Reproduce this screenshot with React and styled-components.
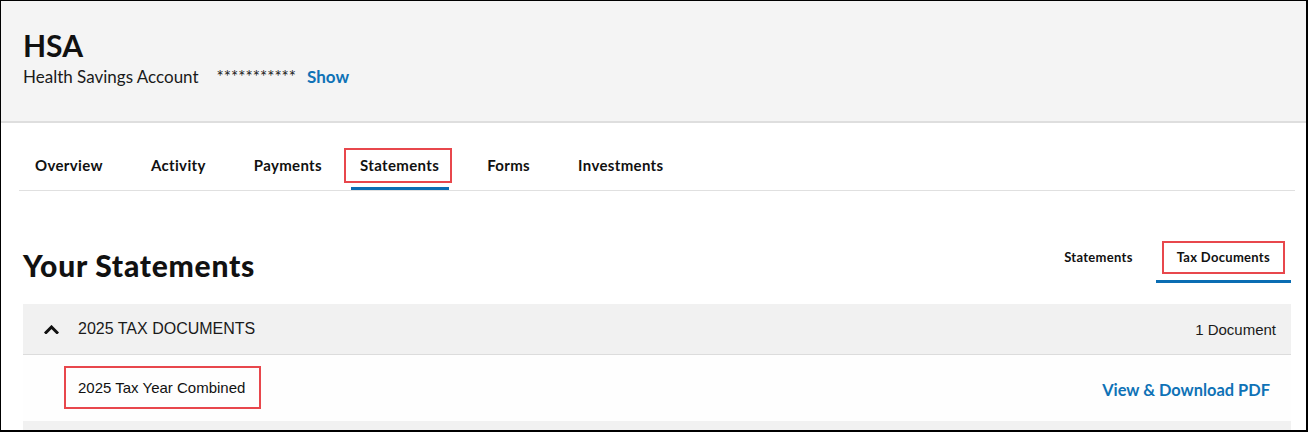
import React from "react";
import styled, { createGlobalStyle } from "styled-components";

const GlobalStyle = createGlobalStyle`
  html, body {
    margin: 0;
    padding: 0;
    background: #fff;
  }
  body {
    font-family: Lato, "Open Sans", sans-serif;
    color: #1a1a1a;
  }
`;

const BLUE = "#0f72b6";
const RED = "#e8474c";

const Frame = styled.div`
  box-sizing: border-box;
  width: 1308px;
  height: 432px;
  border-style: solid;
  border-color: #000;
  border-width: 1px 2px 2px 1px;
  overflow: hidden;
  background: #fff;
`;

const AccountHeader = styled.header`
  box-sizing: border-box;
  height: 122px;
  padding: 26px 22px 0;
  background: #f4f4f4;
  border-bottom: 2px solid #dedede;
`;

const AccountTitle = styled.h1`
  margin: 0;
  font-size: 30px;
  line-height: 36px;
  font-weight: 700;
  color: #111;
`;

const AccountLine = styled.div`
  display: flex;
  align-items: baseline;
  margin-top: 4px;
  font-size: 17px;
  line-height: 20px;
  color: #1a1a1a;
`;

const Masked = styled.span`
  margin-left: 18px;
`;

const TextLink = styled.a`
  margin-left: ${(p) => p.$gap || 0}px;
  margin-top: ${(p) => p.$top || 0}px;
  font-family: Lato, "Open Sans", sans-serif;
  color: ${BLUE};
  font-weight: 700;
  font-size: ${(p) => p.$size || 17}px;
  text-decoration: none;
  cursor: pointer;
`;

const TabBar = styled.nav`
  display: flex;
  gap: 16px;
  margin: 0 11px 0 18px;
  padding-top: 25px;
  border-bottom: 1px solid #e0e0e0;
`;

const Tab = styled.div`
  position: relative;
  display: flex;
  flex-direction: column;
  padding: 0 16px;
  margin-left: ${(p) => (p.$marked ? -10 : 0)}px;
  font-size: 15px;
  font-weight: 700;
  letter-spacing: 0.35px;
  color: #111;

  ${(p) =>
    p.$marked &&
    `
    &::before {
      content: "";
      position: absolute;
      top: 0;
      left: 0;
      right: 3px;
      height: 35px;
      box-sizing: border-box;
      border: 2px solid ${RED};
    }
  `}
`;

const TabLabel = styled.span`
  line-height: 35px;
  white-space: nowrap;
`;

const TabUnderline = styled.span`
  height: 3px;
  margin: 4px -10px 0 -9px;
  background: ${(p) => (p.$active ? "#0a6db3" : "transparent")};
`;

const Main = styled.main`
  padding: 50px 15px 0 22px;
`;

const SectionHead = styled.div`
  display: flex;
  justify-content: space-between;
  align-items: flex-start;
`;

const SectionTitle = styled.h2`
  margin: 6px 0 0;
  font-size: 30px;
  line-height: 36px;
  font-weight: 900;
  letter-spacing: 0.75px;
  color: #111;
`;

const SubTabs = styled.div`
  display: flex;
  gap: 2px;
`;

const SubTab = styled.div`
  position: relative;
  display: flex;
  flex-direction: column;
  font-size: 13px;
  font-weight: 700;
  letter-spacing: 0.3px;
  color: #111;

  ${(p) =>
    p.$marked &&
    `
    &::before {
      content: "";
      position: absolute;
      top: 0;
      left: 6px;
      right: 6px;
      height: 33px;
      box-sizing: border-box;
      border: 2px solid ${RED};
    }
  `}
`;

const SubTabLabel = styled.span`
  padding: 0 21px;
  line-height: 33px;
  white-space: nowrap;
`;

const SubTabUnderline = styled.span`
  height: 3px;
  margin-top: 6px;
  background: ${(p) => (p.$active ? "#0a6db3" : "transparent")};
`;

const Accordion = styled.section`
  margin-top: 21px;
  font-family: "Liberation Sans", Arial, sans-serif;
`;

const GroupHeader = styled.div`
  display: flex;
  align-items: center;
  height: 50px;
  padding: 0 15px 0 21px;
  background: #f1f1f1;
  border-bottom: 1px solid #dcdcdc;
  color: #1a1a1a;
`;

const Chevron = styled.svg`
  width: 15px;
  height: 9px;
  margin-right: 19px;
  flex-shrink: 0;
`;

const GroupTitle = styled.span`
  flex: 1;
  font-size: 16px;
`;

const GroupCount = styled.span`
  font-size: 15px;
`;

const DocRow = styled.div`
  display: flex;
  align-items: center;
  justify-content: space-between;
  height: 66px;
  padding: 0 21px 0 55px;
  background: #fefefe;
`;

const DocName = styled.span`
  position: relative;
  font-size: 15px;
  color: #111;
  margin-top: -2px;

  &::before {
    content: "";
    position: absolute;
    left: -14px;
    right: -16px;
    top: -13px;
    bottom: -13px;
    border: 2px solid ${RED};
  }
`;

const NextGroup = styled.div`
  height: 20px;
  background: #f1f1f1;
`;

const tabs = ["Overview", "Activity", "Payments", "Statements", "Forms", "Investments"];

export default function App() {
  return (
    <Frame>
      <GlobalStyle />
      <AccountHeader>
        <AccountTitle>HSA</AccountTitle>
        <AccountLine>
          <span>Health Savings Account</span>
          <Masked>***********</Masked>
          <TextLink $gap={11}>Show</TextLink>
        </AccountLine>
      </AccountHeader>

      <TabBar>
        {tabs.map((t) => (
          <Tab key={t} $marked={t === "Statements"}>
            <TabLabel>{t}</TabLabel>
            <TabUnderline $active={t === "Statements"} />
          </Tab>
        ))}
      </TabBar>

      <Main>
        <SectionHead>
          <SectionTitle>Your Statements</SectionTitle>
          <SubTabs>
            <SubTab>
              <SubTabLabel>Statements</SubTabLabel>
              <SubTabUnderline />
            </SubTab>
            <SubTab $marked>
              <SubTabLabel>Tax Documents</SubTabLabel>
              <SubTabUnderline $active />
            </SubTab>
          </SubTabs>
        </SectionHead>

        <Accordion>
          <GroupHeader>
            <Chevron viewBox="0 0 15 9">
              <polyline
                points="2,7.5 7.5,2 13,7.5"
                fill="none"
                stroke="#111"
                strokeWidth="3"
                strokeLinecap="square"
              />
            </Chevron>
            <GroupTitle>2025 TAX DOCUMENTS</GroupTitle>
            <GroupCount>1 Document</GroupCount>
          </GroupHeader>
          <DocRow>
            <DocName>2025 Tax Year Combined</DocName>
            <TextLink $size={16.4} $top={3}>
              View &amp; Download PDF
            </TextLink>
          </DocRow>
          <NextGroup />
        </Accordion>
      </Main>
    </Frame>
  );
}
